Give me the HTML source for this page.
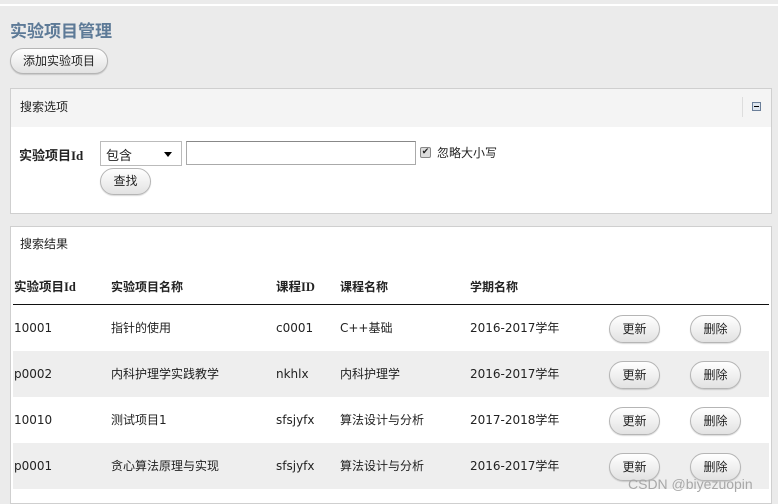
<!DOCTYPE html>
<html><head><meta charset="utf-8"><style>
*{box-sizing:border-box;margin:0;padding:0}
body{width:778px;height:504px;overflow:hidden;background:#ebebeb;font-family:"DejaVu Sans","Noto Sans CJK SC",sans-serif;font-size:12px;color:#222;position:relative}
.a{position:absolute}
.btn{position:absolute;border:1px solid #b5b5b5;border-radius:14px;background:linear-gradient(#fff,#e2e2e2);font-size:12px;text-align:center;color:#222;box-shadow:0 1px 1px rgba(0,0,0,.15)}
.panel{position:absolute;background:#fff;border:1px solid #cfcfcf}
.row{position:absolute;left:2px;width:756px;height:46px}
.row span{position:absolute;top:15px;line-height:16px}
.hd{position:absolute;top:52px;font-weight:bold;line-height:16px}
</style></head><body>
<div class="a" style="left:0;top:4px;width:778px;height:2px;background:#fff"></div>
<div class="a" style="left:10px;top:17px;font-size:17px;font-weight:bold;color:#5d7a97;font-family:'Noto Sans CJK SC',sans-serif">实验项目管理</div>
<div class="btn" style="left:10px;top:48px;width:98px;height:26px;line-height:24px">添加实验项目</div>
<div class="panel" style="left:10px;top:88px;width:762px;height:126px">
 <div class="a" style="left:0;top:0;width:760px;height:38px;background:#f4f4f4"></div>
 <div class="a" style="left:9px;top:9px">搜索选项</div>
 <div class="a" style="left:731px;top:8px;width:1px;height:20px;background:#ddd"></div>
 <div class="a" style="left:741px;top:13px;width:9px;height:9px;border:1px solid #6b7f99;background:#dde5ee"><div style="margin:3px 1px 0;height:1px;background:#000"></div></div>
 <div class="a" style="left:8px;top:56px;font-weight:bold;font-size:13px;font-family:'Liberation Serif','Noto Sans CJK SC',serif">实验项目Id</div>
 <div class="a" style="left:89px;top:52px;width:82px;height:25px;border:1px solid #bbb;background:#fff;padding:3px 5px;font-size:13px">包含<span class="a" style="left:63px;top:10px;border:4px solid transparent;border-top:5px solid #000;border-bottom:0"></span></div>
 <div class="a" style="left:175px;top:52px;width:230px;height:24px;border:1px solid #aaa;border-top-color:#888;background:#fff"></div>
 <div class="a" style="left:409px;top:58px;width:11px;height:11px;border:1px solid #888;border-radius:2px;background:#ddd;font-size:9px;line-height:9px;text-align:center">✔</div>
 <div class="a" style="left:426px;top:55px">忽略大小写</div>
 <div class="btn" style="left:89px;top:79px;width:51px;height:27px;line-height:25px">查找</div>
</div>
<div class="panel" style="left:10px;top:226px;width:762px;height:278px">
 <div class="a" style="left:9px;top:8px">搜索结果</div>
 <div class="hd" style="left:3px;font-size:12.5px;font-family:'Liberation Serif','Noto Sans CJK SC',serif">实验项目Id</div>
 <div class="hd" style="left:100px">实验项目名称</div>
 <div class="hd" style="left:265px;font-size:12.5px;font-family:'Liberation Serif','Noto Sans CJK SC',serif">课程ID</div>
 <div class="hd" style="left:329px">课程名称</div>
 <div class="hd" style="left:459px">学期名称</div>
 <div class="a" style="left:2px;top:77px;width:756px;height:1px;background:#111"></div>
 <div class="row" style="top:78px;background:#fff"><span style="left:1px">10001</span><span style="left:98px">指针的使用</span><span style="left:263px">c0001</span><span style="left:327px">C++基础</span><span style="left:457px">2016-2017学年</span></div>
 <div class="row" style="top:124px;background:#eee"><span style="left:1px">p0002</span><span style="left:98px">内科护理学实践教学</span><span style="left:263px">nkhlx</span><span style="left:327px">内科护理学</span><span style="left:457px">2016-2017学年</span></div>
 <div class="row" style="top:170px;background:#fff"><span style="left:1px">10010</span><span style="left:98px">测试项目1</span><span style="left:263px">sfsjyfx</span><span style="left:327px">算法设计与分析</span><span style="left:457px">2017-2018学年</span></div>
 <div class="row" style="top:216px;background:#eee"><span style="left:1px">p0001</span><span style="left:98px">贪心算法原理与实现</span><span style="left:263px">sfsjyfx</span><span style="left:327px">算法设计与分析</span><span style="left:457px">2016-2017学年</span></div>
 <div class="btn" style="left:598px;top:88px;width:51px;height:28px;line-height:26px">更新</div>
 <div class="btn" style="left:679px;top:88px;width:51px;height:28px;line-height:26px">删除</div>
 <div class="btn" style="left:598px;top:134px;width:51px;height:28px;line-height:26px">更新</div>
 <div class="btn" style="left:679px;top:134px;width:51px;height:28px;line-height:26px">删除</div>
 <div class="btn" style="left:598px;top:180px;width:51px;height:28px;line-height:26px">更新</div>
 <div class="btn" style="left:679px;top:180px;width:51px;height:28px;line-height:26px">删除</div>
 <div class="btn" style="left:598px;top:226px;width:51px;height:28px;line-height:26px">更新</div>
 <div class="btn" style="left:679px;top:226px;width:51px;height:28px;line-height:26px">删除</div>
</div>
<div class="a" style="left:628px;top:476px;font-size:14px;color:#a8a8a8;font-family:'Liberation Sans',sans-serif">CSDN @biyezuopin</div>
</body></html>
